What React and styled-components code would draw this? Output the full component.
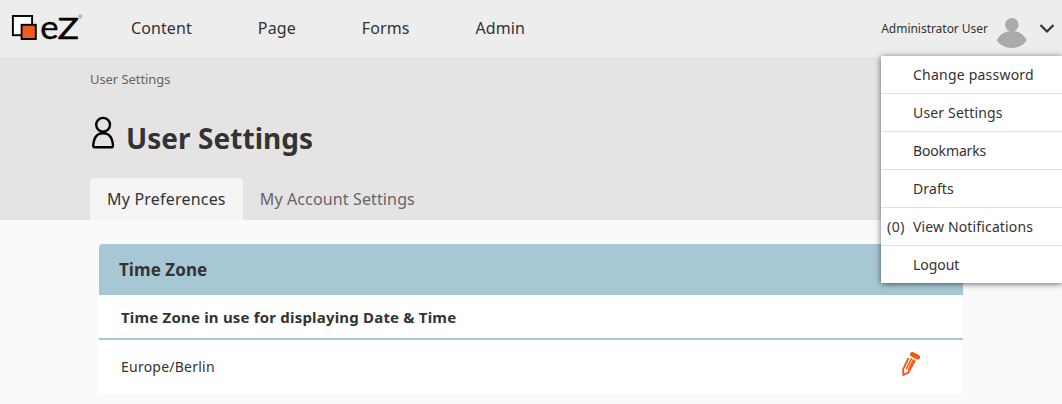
import React from "react";
import styled, { createGlobalStyle } from "styled-components";

const GlobalStyle = createGlobalStyle`
  * { box-sizing: border-box; }
  body {
    margin: 0;
    background: #fafafa;
    color: #333;
    font-family: "Noto Sans", sans-serif;
    overflow: hidden;
  }
`;

const Page = styled.div`
  position: relative;
  height: 404px;
  overflow: hidden;
`;

const Header = styled.header`
  display: flex;
  align-items: center;
  height: 57px;
  padding-left: 11px;
  background: #ededed;
`;

const LogoMark = styled.svg`
  display: block;
  overflow: visible;
`;

const Nav = styled.nav`
  display: flex;
  flex: 1;
  gap: 66px;
  padding: 0 0 2px 46px;
`;

const NavItem = styled.a`
  font-size: 16px;
  line-height: 24px;
  letter-spacing: 0.1px;
`;

const Account = styled.div`
  display: flex;
  align-items: center;
  padding-right: 7px;
`;

const AccountName = styled.span`
  font-size: 12px;
  line-height: 18px;
  letter-spacing: -0.03px;
  margin-right: 8px;
`;

const Avatar = styled.svg`
  display: block;
  margin: 8px 12px 0 0;
`;

const Chevron = styled.svg`
  display: block;
`;

const Hero = styled.section`
  height: 163px;
  padding-left: 90px;
  display: flex;
  flex-direction: column;
  background: #e5e3e4;
`;

const Breadcrumb = styled.div`
  margin-top: 12px;
  font-size: 13px;
  line-height: 20px;
  letter-spacing: -0.07px;
  color: #666;
`;

const Heading = styled.div`
  display: flex;
  align-items: flex-start;
  margin-top: 26px;
  height: 63px;
`;

const UserIcon = styled.svg`
  display: block;
  margin: 1px 10px 0 0;
`;

const Title = styled.h1`
  margin: 4px 0 0;
  font-size: 28px;
  line-height: 38px;
  font-weight: 700;
  letter-spacing: 0.05px;
`;

const Tabs = styled.div`
  display: flex;
  height: 42px;
`;

const Tab = styled.div`
  padding: 0 17px;
  font-size: 16px;
  line-height: 42px;
  letter-spacing: ${({ $active }) => ($active ? "0.2px" : "0.13px")};
  border-radius: 4px 4px 0 0;
  color: ${({ $active }) => ($active ? "#333" : "#666")};
  background: ${({ $active }) => ($active ? "#f5f5f5" : "transparent")};
`;

const Panel = styled.section`
  width: 864px;
  margin: 24px 0 0 99px;
  background: #fff;
  border-radius: 4px 4px 0 0;
  overflow: hidden;
`;

const PanelTitle = styled.h2`
  margin: 0;
  padding-left: 20px;
  font-size: 17px;
  line-height: 51px;
  font-weight: 700;
  letter-spacing: 0.06px;
  background: #a8c7d5;
`;

const PanelSubtitle = styled.h3`
  margin: 0;
  height: 45px;
  padding: 0 22px;
  font-size: 15px;
  line-height: 45px;
  font-weight: 700;
  letter-spacing: 0.19px;
  border-bottom: 2px solid #a8c7d5;
`;

const PanelRow = styled.div`
  display: flex;
  align-items: center;
  justify-content: space-between;
  height: 54px;
  padding: 0 42px 2px 22px;
  font-size: 14px;
  letter-spacing: 0.23px;
`;

const PencilIcon = styled.svg`
  display: block;
  margin-bottom: 3px;
`;

const Menu = styled.ul`
  position: absolute;
  top: 56px;
  right: 0;
  width: 181px;
  margin: 0;
  padding: 0;
  list-style: none;
  background: #fff;
  box-shadow: 0 1px 6px rgba(0, 0, 0, 0.6);
`;

const MenuItem = styled.li`
  display: flex;
  height: 38px;
  font-size: 14px;
  line-height: 37px;
  letter-spacing: ${({ $tracking }) => $tracking}px;
  border-bottom: 1px solid #e0e0e0;
  &:last-child {
    height: 37px;
    border-bottom: 0;
  }
`;

const Count = styled.span`
  width: 32px;
  padding-left: 6px;
  letter-spacing: 0.5px;
`;

const Logo = () => (
  <LogoMark width="74" height="35" viewBox="11 11 74 35">
    <rect x="12.9" y="16" width="19.2" height="19.2" fill="#fff" stroke="#000" strokeWidth="1.9" />
    <rect x="21.6" y="24.8" width="14.2" height="14.2" fill="#f15a22" stroke="#000" strokeWidth="1.9" />
    <g fontFamily="Lato, sans-serif" stroke="#000" strokeWidth="0.4">
      <text x="40.2" y="39.2" fontSize="32.500" textLength="18.300" lengthAdjust="spacingAndGlyphs">e</text>
      <text x="57.500" y="39.300" fontSize="29.500" textLength="21.500" lengthAdjust="spacingAndGlyphs">Z</text>
    </g>
    <text x="78" y="18.500" fontFamily="Lato, sans-serif" fontSize="5.500" fill="#777">®</text>
  </LogoMark>
);

const Pencil = () => (
  <PencilIcon width="20" height="27" viewBox="901 351 20 27" fill="none" stroke="#f9560c">
    <path d="M912.400 354.400l5.300 2.700" strokeWidth="4.800" strokeLinecap="round" />
    <path d="M908.400 358.200l-5.200 11 .1 5.800 5.200-2.700 6.400-12.100" strokeWidth="1.900" strokeLinejoin="round" />
    <path d="M911.300 358.800l-4.700 9.500M913.400 359.800l-4.700 9.500" strokeWidth="1.500" strokeLinecap="round" />
  </PencilIcon>
);

const menu = [
  { label: "Change password", tracking: 0.22 },
  { label: "User Settings", tracking: 0.16 },
  { label: "Bookmarks", tracking: -0.14 },
  { label: "Drafts", tracking: 0.1 },
  { label: "View Notifications", count: "(0)", tracking: 0.14 },
  { label: "Logout", tracking: -0.05 },
];

export default function App() {
  return (
    <Page>
      <GlobalStyle />
      <Header>
        <Logo />
        <Nav>
          {["Content", "Page", "Forms", "Admin"].map((label) => (
            <NavItem key={label}>{label}</NavItem>
          ))}
        </Nav>
        <Account>
          <AccountName>Administrator User</AccountName>
          <Avatar width="31" height="31" viewBox="0 0 31 31" fill="#aaa">
            <circle cx="15.800" cy="7.800" r="6.800" />
            <path d="M.9 23.300C3 18.400 8 14 15.800 14s12.800 4.400 14.900 9.300C27.900 28 22.500 31 15.800 31S3.700 28 .9 23.300z" />
          </Avatar>
          <Chevron width="16" height="12" viewBox="0 0 16 12" fill="none" stroke="#333" strokeWidth="2.200">
            <path d="M1.500 2l6.500 6.500 6.500-6.500" />
          </Chevron>
        </Account>
      </Header>
      <Hero>
        <Breadcrumb>User Settings</Breadcrumb>
        <Heading>
          <UserIcon width="26" height="34" viewBox="90 116 26 34" fill="none" stroke="#000" strokeWidth="2.400">
            <circle cx="103.100" cy="124.800" r="6.900" />
            <path d="M98 134.500c-3 2.200-4.500 6-4.800 10.900-.1 1.200.6 1.900 1.800 1.900h16.200c1.200 0 1.900-.7 1.800-1.900-.3-4.900-1.800-8.700-4.800-10.900-3.200-1.500-7-1.500-10.200 0z" />
          </UserIcon>
          <Title>User Settings</Title>
        </Heading>
        <Tabs>
          <Tab $active>My Preferences</Tab>
          <Tab>My Account Settings</Tab>
        </Tabs>
      </Hero>
      <Panel>
        <PanelTitle>Time Zone</PanelTitle>
        <PanelSubtitle>Time Zone in use for displaying Date &amp; Time</PanelSubtitle>
        <PanelRow>
          Europe/Berlin
          <Pencil />
        </PanelRow>
      </Panel>
      <Menu>
        {menu.map(({ label, count, tracking }) => (
          <MenuItem key={label} $tracking={tracking}>
            <Count>{count}</Count>
            {label}
          </MenuItem>
        ))}
      </Menu>
    </Page>
  );
}
